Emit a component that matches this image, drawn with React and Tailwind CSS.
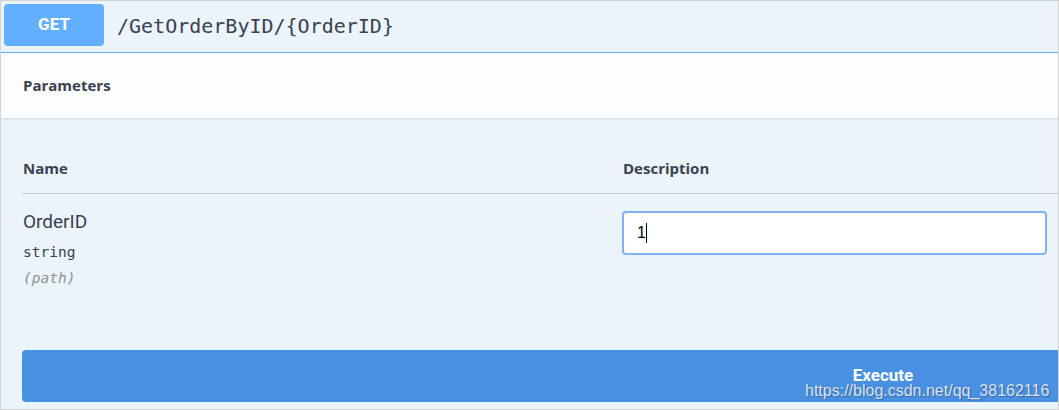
import React from 'react';

const uiFont = { fontFamily: 'Roboto, "Open Sans", sans-serif' };

const App = () => {
    return (
        <div className="w-[1059px] h-[410px] border border-[#d4d4d4] bg-[#ebf3fb] overflow-hidden relative" style={uiFont}>
            <div className="flex items-center h-[52px] pl-[3px] border-b border-[#61affe]">
                <div className="w-[100px] h-[42px] mb-[3px] rounded-[4px] bg-[#61affe] flex items-center justify-center text-white font-bold text-[17px]">
                    GET
                </div>
                <span className="ml-[13px] mb-[1px] text-[20px] text-[#3b4151] font-['DejaVu_Sans_Mono',monospace]">
                    /GetOrderByID/{'{OrderID}'}
                </span>
            </div>

            <div className="h-[65px] bg-[#fcfdff] flex items-center pl-[22px] shadow-[0_1px_2px_rgba(0,0,0,0.12)]">
                <span className="text-[15px] font-bold text-[#3b4151] font-['Open_Sans',sans-serif]">Parameters</span>
            </div>

            <div className="pl-[21px]">
                <div className="flex pt-[40px] pb-[15px] border-b border-[#c9d0da] text-[15px] font-bold text-[#3b4151] leading-[20px] font-['Open_Sans',sans-serif]">
                    <div className="w-[600px] pl-[1px]">Name</div>
                    <div className="pl-[1px]">Description</div>
                </div>

                <div className="flex pt-[16px]">
                    <div className="w-[600px] pl-[1px] text-[#3b4151]">
                        <div className="text-[19px] leading-[24px]">OrderID</div>
                        <div className="mt-[8px] text-[14.5px] leading-[20px] font-['DejaVu_Sans_Mono',monospace]">string</div>
                        <div className="mt-[6px] text-[14.5px] leading-[20px] italic text-[#909090] font-['DejaVu_Sans_Mono',monospace]">(path)</div>
                    </div>
                    <div className="mt-[1px] w-[425px] h-[44px] border-2 border-[#82b1f4] rounded-[4px] bg-white flex items-center pl-[13px] text-[16px] text-black font-['Liberation_Sans',sans-serif]">
                        <span>1</span>
                        <span className="w-[1px] h-[20px] bg-black"></span>
                    </div>
                </div>

                <div className="mt-[62px] w-[1722px] h-[52px] rounded-[4px] bg-[#4990e2] flex items-center justify-center text-white font-bold text-[17px]">
                    Execute
                </div>
            </div>

            <div className="absolute left-[804px] top-[380px] text-[16px] leading-[20px] text-[#d9e3ef] font-['Liberation_Sans',sans-serif] [text-shadow:1px_1px_1px_rgba(40,50,70,0.45)]">
                https://blog.csdn.net/qq_38162116
            </div>
        </div>
    );
};

export default App;
